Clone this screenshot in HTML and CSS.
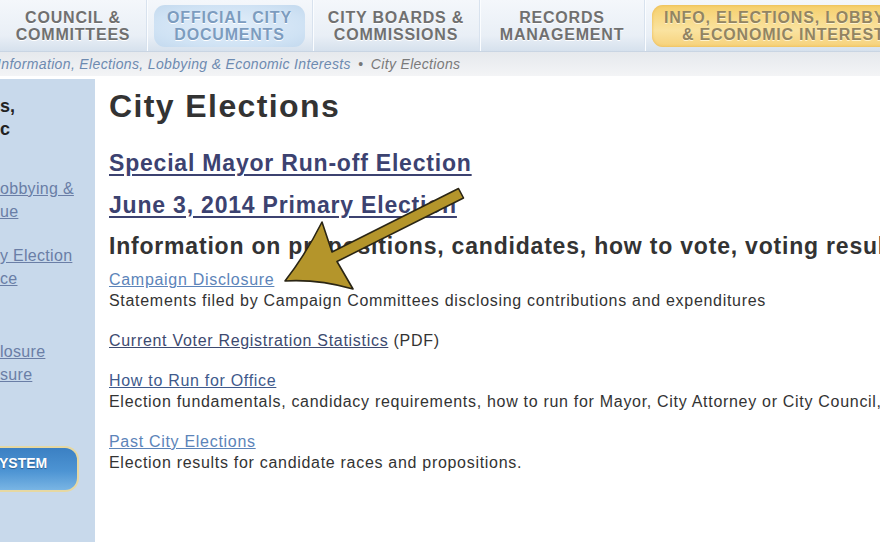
FILE: index.html
```html
<!DOCTYPE html>
<html lang="en">
<head>
<meta charset="utf-8">
<title>City Elections</title>
<link rel="stylesheet" href="styles.css">
</head>
<body>
<div class="page">
  <nav class="nav">
    <div class="nav-item w1"><span class="nav-label">COUNCIL &amp;<br>COMMITTEES</span></div>
    <div class="nav-item w2"><span class="nav-label pill-blue">OFFICIAL CITY<br>DOCUMENTS</span></div>
    <div class="nav-item w3"><span class="nav-label">CITY BOARDS &amp;<br>COMMISSIONS</span></div>
    <div class="nav-item w4"><span class="nav-label">RECORDS<br>MANAGEMENT</span></div>
    <div class="nav-item w5"><span class="nav-label pill-gold">INFO, ELECTIONS, LOBBYING<br>&amp; ECONOMIC INTERESTS</span></div>
  </nav>
  <div class="crumbs"><span class="crumb-inner"><a class="crumb-link">Information, Elections, Lobbying &amp; Economic Interests</a> <span class="crumb-dot">•</span> <span class="crumb-here">City Elections</span></span></div>
  <div class="layout">
    <aside class="side">
      <div class="side-title">s,<br>c</div>
      <div class="side-link first"><a>obbying &amp;</a><br><a>ue</a></div>
      <div class="side-link"><a>y Election</a><br><a>ce</a></div>
      <div class="side-link third"><a>losure</a><br><a>sure</a></div>
      <div class="side-btn">YSTEM</div>
    </aside>
    <main class="main">
      <h1 class="title">City Elections</h1>
      <h2 class="sub"><a class="sub-link">Special Mayor Run-off Election</a></h2>
      <h2 class="sub"><a class="sub-link">June 3, 2014 Primary Election</a></h2>
      <h2 class="sub plain">Information on propositions, candidates, how to vote, voting results</h2>
      <div class="entry first">
        <a class="lnk light">Campaign Disclosure</a><br>
        <span class="desc">Statements filed by Campaign Committees disclosing contributions and expenditures</span>
      </div>
      <div class="entry">
        <a class="lnk dark">Current Voter Registration Statistics</a> <span class="desc">(PDF)</span>
      </div>
      <div class="entry">
        <a class="lnk mid">How to Run for Office</a><br>
        <span class="desc">Election fundamentals, candidacy requirements, how to run for Mayor, City Attorney or City Council, and more</span>
      </div>
      <div class="entry">
        <a class="lnk light">Past City Elections</a><br>
        <span class="desc">Election results for candidate races and propositions.</span>
      </div>
    </main>
  </div>
  <svg class="arrow" width="880" height="542" viewBox="0 0 880 542" aria-hidden="true">
    <path d="M285,281 Q306,254 322,222 L332,252 L458.5,188.5 L463.5,198 L337,261.5 L353,289 Q318,279 285,281 Z" fill="#b4952b" stroke="#2a2514" stroke-width="1.6" stroke-linejoin="round"/>
  </svg>
</div>
</body>
</html>
```

FILE: styles.css
```css
* { box-sizing: border-box; }
html, body { margin: 0; padding: 0; }
body {
  background: #ffffff;
  font-family: "Liberation Sans", Arial, sans-serif;
  color: #333333;
  width: 880px;
  height: 542px;
  overflow: hidden;
}
.page { position: relative; width: 880px; height: 542px; overflow: hidden; }

/* NAV */
.nav {
  display: flex;
  height: 52px;
  background: linear-gradient(to bottom, #f4f7fb 0%, #e9eff6 70%, #d6e1ed 100%);
  border-bottom: 1px solid #c9d5e3;
  white-space: nowrap;
}
.nav-item {
  flex: none;
  display: flex;
  align-items: center;
  justify-content: center;
  border-right: 1px solid #d8e2ee;
  box-shadow: 1px 0 0 #fbfdff;
}
.w1 { width: 147px; }
.w2 { width: 166px; }
.w3 { width: 167px; }
.w4 { width: 165px; }
.w5 { width: 235px; justify-content: flex-start; padding-left: 7px; border-right: none; box-shadow: none; }
.nav-label {
  display: block;
  text-align: center;
  font-weight: bold;
  font-size: 16px;
  line-height: 17px;
  letter-spacing: 0.8px;
  color: #707070;
  text-shadow: 0 1px 0 #ffffff;
}
.pill-blue {
  width: 151px;
  height: 42px;
  padding-top: 4px;
  border-radius: 11px;
  background: radial-gradient(ellipse at center, #e2eefa 0%, #cfe2f4 70%, #c3d9ee 100%);
  color: #7c9cbf;
}
.pill-gold {
  flex: none;
  height: 42px;
  width: 262px;
  padding-top: 4px;
  padding-left: 12px;
  text-align: center;
  border-radius: 11px;
  background: linear-gradient(to bottom, #f5cf6c 0%, #fae3a0 60%, #f6d17a 100%);
  box-shadow: inset 0 0 3px #e9b54c;
  color: #928462;
  text-shadow: 0 1px 0 #fff3cc;
}

/* BREADCRUMB */
.crumbs {
  height: 24px;
  background: linear-gradient(to bottom, #e6e9ed 0%, #f3f4f6 100%);
  font-size: 14px;
  font-style: italic;
  line-height: 24px;
  white-space: nowrap;
  overflow: hidden;
}
.crumb-inner { display: inline-block; margin-left: -3px; letter-spacing: 0.35px; }
.crumb-link { color: #6d8ab0; }
.crumb-dot { color: #777; font-style: normal; padding: 0 3px; }
.crumb-here { color: #7a7a7a; }

/* LAYOUT */
.layout { display: flex; margin-top: 3px; height: 463px; }
.side {
  flex: none;
  width: 95px;
  background: #c8d9eb;
  padding-top: 16px;
  white-space: nowrap;
  overflow: hidden;
}
.side-title {
  font-weight: bold;
  font-size: 18px;
  line-height: 23px;
  color: #222;
}
.side-link {
  font-size: 16px;
  line-height: 23px;
  margin-top: 21px;
  letter-spacing: 0.3px;
}
.side-link.first { margin-top: 36px; }
.side-link.third { margin-top: 50px; }
.side-link a { color: #6a7ea6; text-decoration: underline; }
.side-btn {
  margin-top: 60px;
  width: 81px;
  height: 46px;
  margin-left: -2px;
  padding-top: 6px;
  padding-left: 1px;
  border: 2px solid #e6d8a2;
  border-left: none;
  border-radius: 0 14px 14px 0;
  background: linear-gradient(to bottom, #3b80c3 0%, #4d94d3 55%, #79b5e4 100%);
  color: #ffffff;
  font-weight: bold;
  font-size: 14px;
  line-height: 18px;
  text-shadow: 0 1px 1px #2c5d90;
}

/* MAIN */
.main {
  flex: 1;
  padding-left: 14px;
  padding-top: 8px;
  white-space: nowrap;
  overflow: hidden;
}
.title {
  margin: 0 0 17px 0;
  font-size: 32px;
  line-height: 38px;
  letter-spacing: 1.4px;
  font-weight: bold;
  color: #333333;
}
.sub {
  margin: 0;
  font-size: 23px;
  line-height: 42px;
  letter-spacing: 0.8px;
  font-weight: bold;
  color: #3c4270;
}
.sub-link { color: #3c4270; text-decoration: underline; text-underline-offset: 3px; }
.sub.plain { color: #333333; line-height: 41px; }
.entry {
  font-size: 16px;
  line-height: 21px;
  letter-spacing: 0.7px;
  margin-top: 19px;
}
.entry.first { margin-top: 2px; }
.lnk { text-decoration: underline; }
.lnk.light { color: #5c84b9; }
.lnk.dark { color: #3d4a70; }
.lnk.mid { color: #405a8c; }
.desc { color: #333333; }

/* ARROW OVERLAY */
.arrow { position: absolute; left: 0; top: 0; pointer-events: none; }
```
